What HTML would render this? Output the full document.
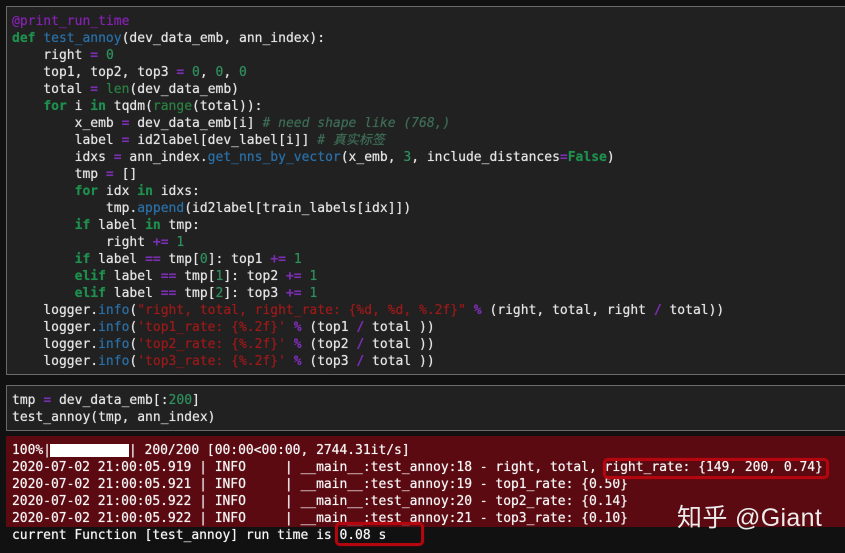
<!DOCTYPE html>
<html><head><meta charset="utf-8">
<style>
html,body{margin:0;padding:0;background:#111;}
body{width:845px;height:553px;position:relative;overflow:hidden;}
.cell{position:absolute;left:6px;right:-4px;background:#212121;border:1px solid #6a6a6a;box-sizing:border-box;}
pre{position:absolute;left:12px;margin:0;font:13px/17px "DejaVu Sans Mono","Liberation Mono","Noto Sans CJK SC",monospace;letter-spacing:0;color:#e4e4e4;filter:blur(.35px);white-space:pre;text-shadow:0 0 .6px currentColor;}
.k{color:#1f8f4e;font-weight:bold}.f{color:#2a6fa6}.o{color:#7a2eb0;font-weight:bold}.n{color:#2f8f5c}
.d{color:#8422ae}.s{color:#9a1a1a}.c{color:#3d6b55;font-style:italic}.b{color:#2a7f42}
.out{color:#f6f6f6;letter-spacing:-.03px}
.box{position:absolute;border:3px solid #b4060e;border-radius:5px;box-sizing:border-box;box-shadow:0 0 1px #b4060e;}
</style></head><body>
<div class="cell" style="top:6px;height:369px"></div>
<pre style="top:13px"><span class="d">@print_run_time</span>
<span class="k">def</span> <span class="f">test_annoy</span>(dev_data_emb, ann_index):
    right <span class="o">=</span> <span class="n">0</span>
    top1, top2, top3 <span class="o">=</span> <span class="n">0</span>, <span class="n">0</span>, <span class="n">0</span>
    total <span class="o">=</span> <span class="b">len</span>(dev_data_emb)
    <span class="k">for</span> i <span class="k">in</span> tqdm(<span class="b">range</span>(total)):
        x_emb <span class="o">=</span> dev_data_emb[i] <span class="c"># need shape like (768,)</span>
        label <span class="o">=</span> id2label[dev_label[i]] <span class="c"># 真实标签</span>
        idxs <span class="o">=</span> ann_index.<span class="f">get_nns_by_vector</span>(x_emb, <span class="n">3</span>, include_distances<span class="o">=</span><span class="k">False</span>)
        tmp <span class="o">=</span> []
        <span class="k">for</span> idx <span class="k">in</span> idxs:
            tmp.<span class="f">append</span>(id2label[train_labels[idx]])
        <span class="k">if</span> label <span class="k">in</span> tmp:
            right <span class="o">+=</span> <span class="n">1</span>
        <span class="k">if</span> label <span class="o">==</span> tmp[<span class="n">0</span>]: top1 <span class="o">+=</span> <span class="n">1</span>
        <span class="k">elif</span> label <span class="o">==</span> tmp[<span class="n">1</span>]: top2 <span class="o">+=</span> <span class="n">1</span>
        <span class="k">elif</span> label <span class="o">==</span> tmp[<span class="n">2</span>]: top3 <span class="o">+=</span> <span class="n">1</span>
    logger.<span class="f">info</span>(<span class="s">"right, total, right_rate: {%d, %d, %.2f}"</span> <span class="o">%</span> (right, total, right <span class="o">/</span> total))
    logger.<span class="f">info</span>(<span class="s">'top1_rate: {%.2f}'</span> <span class="o">%</span> (top1 <span class="o">/</span> total ))
    logger.<span class="f">info</span>(<span class="s">'top2_rate: {%.2f}'</span> <span class="o">%</span> (top2 <span class="o">/</span> total ))
    logger.<span class="f">info</span>(<span class="s">'top3_rate: {%.2f}'</span> <span class="o">%</span> (top3 <span class="o">/</span> total ))</pre>

<div class="cell" style="top:385px;height:46px"></div>
<pre style="top:392px">tmp <span class="o">=</span> dev_data_emb[:<span class="n">200</span>]
test_annoy(tmp, ann_index)</pre>

<div style="position:absolute;left:6px;right:0;top:436px;height:91px;background:#5c0a12"></div>
<div style="position:absolute;left:50px;top:444px;width:79px;height:13px;background:#fff"></div>
<pre class="out" style="top:442px">100%|          | 200/200 [00:00&lt;00:00, 2744.31it/s]
2020-07-02 21:00:05.919 | INFO     | __main__:test_annoy:18 - right, total, right_rate: {149, 200, 0.74}
2020-07-02 21:00:05.921 | INFO     | __main__:test_annoy:19 - top1_rate: {0.50}
2020-07-02 21:00:05.922 | INFO     | __main__:test_annoy:20 - top2_rate: {0.14}
2020-07-02 21:00:05.922 | INFO     | __main__:test_annoy:21 - top3_rate: {0.10}</pre>
<div style="position:absolute;left:0;right:0;top:527px;height:26px;background:#111"></div>
<pre class="out" style="top:527px">current Function [test_annoy] run time is 0.08 s</pre>
<div class="box" style="left:603px;top:458px;width:226px;height:21px"></div>
<div class="box" style="left:335px;top:522px;width:89px;height:24px"></div>
<div style="position:absolute;left:677px;top:501px;font:25px/34px 'Liberation Sans','Noto Sans CJK SC',sans-serif;letter-spacing:.35px;color:#ececec;white-space:nowrap;">知乎 @Giant</div>
</body></html>
